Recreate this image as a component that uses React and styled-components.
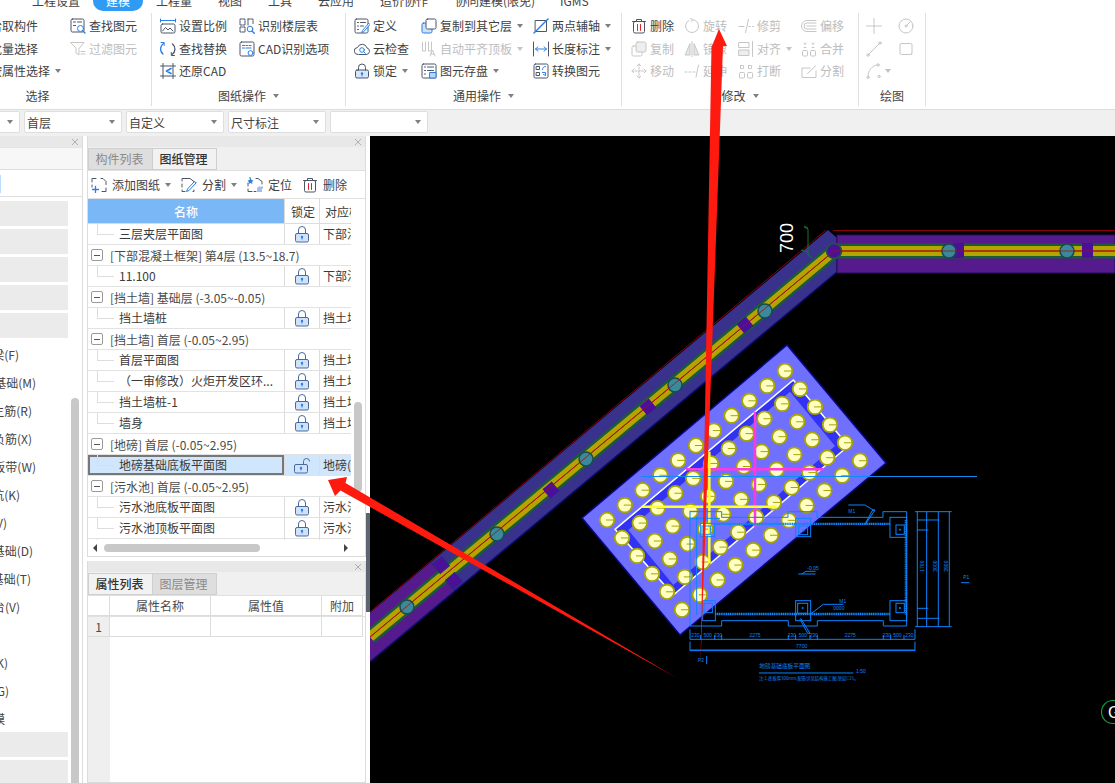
import React from 'react';
import styled, { createGlobalStyle } from 'styled-components';

const Global = createGlobalStyle`
  html, body { margin: 0; padding: 0; background: #fff; }
  * { box-sizing: border-box; }
`;

const FONT = '"Noto Sans CJK SC", "Liberation Sans", sans-serif';

const Page = styled.div`
  position: relative;
  width: 1115px;
  height: 783px;
  overflow: hidden;
  display: flex;
  flex-direction: column;
  font-family: ${FONT};
  font-size: 12px;
  color: #3a3a3a;
  background: #fff;
`;

/* ---------- top tabs ---------- */
const TabBar = styled.div`
  height: 11px;
  flex: none;
  display: flex;
  align-items: flex-end;
  overflow: hidden;
  padding-left: 32px;
`;
const TopTab = styled.div`
  flex: none;
  width: ${p => p.$w}px;
  height: 20px;
  line-height: 20px;
  white-space: nowrap;
  color: #444;
`;
const ActiveTop = styled.div`
  flex: none;
  width: 50px;
  height: 20px;
  margin: 0 13px 0 13px;
  line-height: 20px;
  text-align: center;
  color: #fff;
  background: #2f9bf5;
  border-radius: 0 0 10px 10px;
`;

/* ---------- ribbon ---------- */
const Ribbon = styled.div`
  height: 99px;
  flex: none;
  display: flex;
  border-bottom: 1px solid #dcdcdc;
`;
const Group = styled.div`
  flex: none;
  width: ${p => p.$w}px;
  margin: 2px 0 3px;
  padding-top: 2px;
  display: flex;
  flex-direction: column;
  justify-content: space-between;
  border-right: 1px solid #e0e0e0;
  overflow: hidden;
`;
const GroupBody = styled.div`
  display: grid;
  grid-template-columns: ${p => p.$cols};
  grid-auto-rows: 22.5px;
  margin-left: ${p => p.$left}px;
`;
const GroupLabel = styled.div`
  height: 20px;
  display: flex;
  justify-content: center;
  align-items: center;
  gap: 5px;
  padding-right: ${p => p.$shift || 0}px;
  color: #444;
  line-height: 20px;
`;
const ToolItem = styled.div`
  display: flex;
  align-items: center;
  gap: ${p => p.$gap ?? 3}px;
  white-space: nowrap;
  color: ${p => (p.$off ? '#bdbdbd' : '#3f3f3f')};
  line-height: 16px;
`;
const Caret = styled.span`
  flex: none;
  width: 0;
  height: 0;
  margin-left: ${p => p.$ml ?? 2}px;
  border-left: 3.5px solid transparent;
  border-right: 3.5px solid transparent;
  border-top: 4px solid ${p => (p.$off ? '#c4c4c4' : '#808080')};
`;
const IconSvg = styled.svg`
  flex: none;
  width: 16px;
  height: 16px;
  fill: none;
  stroke-width: 1;
  stroke-linecap: round;
  stroke-linejoin: round;
`;

const D = '#4a5568';
const B = '#2a7fe6';
const R = '#e02424';
const icons = {
  blank: () => null,
  find: (c, a) => <><rect x="1" y="1" width="13" height="13" rx="1.5" stroke={c}/><path d="M3.5 4h2M7.5 4h4M3.5 7.5h2" stroke={c}/><circle cx="10.5" cy="10.5" r="3" stroke={a} fill="#fff"/><path d="M12.7 12.7l2.3 2.3" stroke={a} strokeWidth="1.4"/></>,
  filter: (c) => <><path d="M1 1.5h13l-5 6V14l-3-2V7.5z" stroke={c}/><path d="M11 10.5h4M11 13h4" stroke={c}/></>,
  scale: (c, a) => <><path d="M.5 2.5h15M.5 1v3M15.5 1v3" stroke={a}/><rect x="1" y="6" width="14" height="9" rx="1.5" stroke={c}/><path d="M2.5 13l3-3.5 2.5 2.5 2-2 3 3" stroke={c}/></>,
  floors: (c, a) => <><path d="M1 1h5v6H1zM9 1h5v5M1 9h5v5H1zM9 1v6" stroke={c} strokeDasharray="2.5 1"/><circle cx="11" cy="11" r="2.8" stroke={a}/><path d="M13 13l2.3 2.3" stroke={a} strokeWidth="1.4"/></>,
  replace: (c, a) => <><path d="M3.5 2.5A6.5 6.5 0 0 0 3 13" stroke={a} strokeWidth="1.3"/><path d="M1 1.5h3.2v3" stroke={a}/><path d="M12 13.5A6.5 6.5 0 0 0 12.5 3" stroke={c} strokeWidth="1.3"/><path d="M14.5 14.5h-3.2v-3" stroke={c}/></>,
  cad: (c, a) => <><rect x="1" y="1" width="14" height="14" rx="1.5" stroke={c}/><path d="M3.5 4.5h2M3.5 7h2M7 4.5h1.5M10 4.5h2M7 7h5" stroke={a} strokeWidth="1.2"/><circle cx="11.5" cy="12" r="2.4" stroke={a} fill="#fff"/></>,
  restore: (c, a) => <><path d="M3 .5v15M13 .5v15M.5 3h15M.5 13h15" stroke={c}/><path d="M11 5.5L6.5 8l4.500 2.500" stroke={a} strokeWidth="1.6"/></>,
  define: (c, a) => <><rect x="1" y="1" width="13" height="14" rx="1.5" stroke={c}/><path d="M3.500 4.500h1M6.500 4.500h5M3.500 8h1M6.500 8h3M3.500 11.500h1" stroke={c}/><path d="M14.500 5.500l-6 7-.8 2 2-.7 6-7z" stroke={a} fill="#fff"/></>,
  cloud: (c, a) => <><path d="M4 13.500a3.500 3.500 0 0 1-.5-7A5 5 0 0 1 13 7a3.300 3.300 0 0 1-.5 6.500z" stroke={c}/><circle cx="8" cy="9" r="2.300" stroke={a}/><path d="M9.700 10.700l1.600 1.600" stroke={a}/></>,
  lock: (c, a) => <><rect x="1.500" y="7" width="13" height="8" rx="1.500" stroke={c} fill="#d6e6fa"/><path d="M4.500 7V4.500a3.500 3.500 0 0 1 7 0V7" stroke={c}/><circle cx="8" cy="10.500" r="1.200" fill={a}/><path d="M8 11v2" stroke={a}/></>,
  copyLayer: (c, a) => <><rect x="1" y="5" width="10" height="10" rx="1.500" stroke={a} fill="#cfe2fb"/><rect x="5" y="1" width="10" height="10" rx="1.500" stroke={c} fill="#fff"/></>,
  autoAlign: (c) => <><path d="M1.500 1v9h3V1M7.500 1v9h3V1" stroke={c}/><path d="M9 15l2.500-6 2.500 6M10 13h3" stroke={c}/></>,
  save: (c, a) => <><rect x="1" y="1" width="14" height="14" rx="1.500" stroke={c}/><path d="M3.500 4h1M6.500 4h6M3.500 7.500h1M6.500 7.500h6M3.500 11h1" stroke={c}/><rect x="9" y="9.500" width="6" height="5.500" fill="#bcd6f7" stroke={a}/></>,
  twoPoint: (c, a) => <><rect x="2.500" y="2.500" width="11" height="11" stroke={c}/><path d="M1 15L15 1" stroke={a} strokeWidth="1.500"/></>,
  dim: (c, a) => <><path d="M.5 1v14M15.500 1v14" stroke={c}/><path d="M2.500 8h11M5 5.800L2.500 8 5 10.200M11 5.800L13.500 8 11 10.200" stroke={a}/></>,
  convert: (c, a) => <><rect x="1" y="1" width="14" height="14" rx="1.500" stroke={c}/><rect x="3.500" y="3.500" width="3" height="3" stroke={c}/><rect x="3.500" y="9.500" width="3" height="3" stroke={c}/><path d="M9.500 6.500c0-2 1.500-3 3-3M9.500 9.500h3v3l-2-1" stroke={a}/></>,
  del: (c, a, off) => <><path d="M1.500 3.500h13M5.500 3.500V1.500h5v2" stroke={c}/><rect x="2.500" y="3.500" width="11" height="11.500" rx="1.500" stroke={c}/><path d="M6.500 6.500v6M9.500 6.500v6" stroke={off ? c : R}/></>,
  copy: (c) => <><rect x="1" y="5" width="10" height="10" rx="1.500" stroke={c}/><rect x="5" y="1" width="10" height="10" rx="1.500" stroke={c} fill="#eee"/></>,
  move: (c) => <path d="M8 1v14M1 8h14M6 3l2-2 2 2M6 13l2 2 2-2M3 6L1 8l2 2M13 6l2 2-2 2" stroke={c} strokeDasharray="2 1.200"/>,
  rotate: (c) => <><path d="M5 2.300A6.500 6.500 0 1 0 9 1.600" stroke={c}/><path d="M6.500 .5L9 1.600 7 3.500" stroke={c}/></>,
  mirror: (c) => <><path d="M8 .5v15" stroke={c}/><path d="M6 3v11H1.500zM10 3v11h4.500z" stroke={c} fill="#e6e6e6"/></>,
  trim: (c) => <><path d="M1 8.500h5M11 8.500h1.500M14.500 8.500h1" stroke={c}/><path d="M10.500 1.500l-3 13" stroke={c}/></>,
  extend: (c) => <><path d="M1 9h2M5 9h2M9 9h2" stroke={c}/><path d="M14.500 2l-2.500 12" stroke={c}/></>,
  align: (c) => <><rect x="1" y="1.500" width="10" height="5" stroke={c}/><rect x="1" y="9" width="10" height="5.500" stroke={c} fill="#eee"/><path d="M14.500 .5v15" stroke={c}/></>,
  merge: (c) => <><rect x="1.500" y="9.500" width="5" height="5.500" rx="1" stroke={c}/><rect x="9.500" y="9.500" width="5" height="5.500" rx="1" stroke={c}/><path d="M3 2l1 1.500L5 2M3 6.500h2M11 2l1 1.500L13 2M11 6.500h2" stroke={c}/></>,
  brk: (c) => <><rect x="1.500" y="9.500" width="5" height="5.500" rx="1" stroke={c}/><rect x="9.500" y="9.500" width="5" height="5.500" rx="1" stroke={c}/><path d="M2.500 2.500h3v3h-3zM10.500 2.500h3v3h-3z" stroke={c} strokeDasharray="1.500 1"/></>,
  offset: (c) => <><path d="M15 2.500H6a5.500 5.500 0 0 0 0 11h9" stroke={c}/><path d="M15 5H6a3 3 0 0 0 0 6h9M15 8H6" stroke={c}/></>,
  split: (c) => <><path d="M15 8v6.500H1V5h8" stroke={c}/><path d="M6.500 10.500L14.500 3" stroke={c}/></>,
  point: (c) => <><path d="M8 .5v5M8 10.500v5M.5 8h5M10.500 8h5" stroke={c}/><circle cx="8" cy="8" r="1.500" fill={c}/></>,
  dial: (c) => <><circle cx="8" cy="8" r="7" stroke={c}/><circle cx="8" cy="8" r="1" stroke={c}/><path d="M9 7l3-3" stroke={c}/></>,
  line: (c) => <><path d="M2 14L14 2" stroke={c}/><circle cx="2" cy="14" r="1.200" stroke={c}/><circle cx="14" cy="2" r="1.200" stroke={c}/></>,
  rect: (c) => <><rect x="2" y="2.500" width="12" height="11" rx="1.500" stroke={c}/><circle cx="13.500" cy="13" r=".8" fill={c}/></>,
  arc: (c) => <><path d="M2 14C2 7 6 3 11 2" stroke={c}/><circle cx="2" cy="14.300" r="1.200" stroke={c}/><circle cx="12" cy="2" r="1.200" stroke={c}/><circle cx="13" cy="13.500" r="1.200" stroke={c}/></>,
  add: (c, a) => <><path d="M1 5V1.500h4M10 1.500h2l3 3v3M15 11v3.500h-4M1 8v2" stroke={c}/><path d="M1.500 12.500h6M4.500 9.500v6" stroke={a} strokeWidth="1.300"/></>,
  splitDoc: (c, a) => <><path d="M1 4V1.500h8l4 3V6M1 7v3M1 13v1.500h3M12 14.500h1V13" stroke={c}/><path d="M15 6l-7 7.500-2.500 1 1-2.500L13 5z" stroke={a} fill="#fff"/></>,
  locate: (c, a) => <><path d="M3 1.500v-1M1 6v3M1 12v2.500h4M7 14.500h2M9 1.500h2l4 3V7M15 10v1" stroke={c}/><path d="M3.500 1l1 2 2 .5-1.500 1.500.5 2-2-1-2 1 .5-2L.5 3.500l2-.5z" fill={a}/><path d="M10 15V11l2.500-2 2.500 2v4z" fill="#9cc4f2"/></>,
};

const Icon = ({ name, off }) => {
  const c = off ? '#c6c6c6' : D;
  const a = off ? '#c6c6c6' : B;
  return <IconSvg viewBox="0 0 16 16">{icons[name](c, a, off)}</IconSvg>;
};

const Tool = ({ icon, label, off, caret, ml, gap }) => (
  <ToolItem $off={off} $gap={gap}>
    <Icon name={icon} off={off} />
    {label && <span>{label}</span>}
    {caret && <Caret $off={off} $ml={ml} />}
  </ToolItem>
);

const ribbonGroups = [
  { w: 152, left: -29, cols: '99px auto', label: '选择', shift: 76, items: [
    ['blank', '拾取构件'], ['find', '查找图元'],
    ['blank', '批量选择'], ['filter', '过滤图元', 1],
    ['blank', '按属性选择', 0, 1] ] },
  { w: 194, left: 8, cols: '79px auto', label: '图纸操作', caret: 1, items: [
    ['scale', '设置比例'], ['floors', '识别楼层表'],
    ['replace', '查找替换'], ['cad', 'CAD识别选项'],
    ['restore', '还原CAD'] ] },
  { w: 276, left: 8, cols: '67px 112px auto', label: '通用操作', caret: 1, items: [
    ['define', '定义'], ['copyLayer', '复制到其它层', 0, 1], ['twoPoint', '两点辅轴', 0, 1],
    ['cloud', '云检查'], ['autoAlign', '自动平齐顶板', 1, 1], ['dim', '长度标注', 0, 1],
    ['lock', '锁定', 0, 1], ['save', '图元存盘', 0, 1], ['convert', '转换图元'] ] },
  { w: 237, left: 9, cols: '53px 54px 63px auto', label: '修改', caret: 1, items: [
    ['del', '删除'], ['rotate', '旋转', 1], ['trim', '修剪', 1], ['offset', '偏移', 1],
    ['copy', '复制', 1], ['mirror', '镜像', 1], ['align', '对齐', 1, 1], ['merge', '合并', 1],
    ['move', '移动', 1], ['extend', '延伸', 1], ['brk', '打断', 1], ['split', '分割', 1] ] },
  { w: 67, left: 7, cols: '32px auto', label: '绘图', items: [
    ['point', '', 1], ['dial', '', 1],
    ['line', '', 1], ['rect', '', 1],
    ['arc', '', 1, 1] ] },
];

/* ---------- select bar ---------- */
const SelectBar = styled.div`
  height: 26px;
  flex: none;
  display: flex;
  gap: 4px;
  padding-top: 1px;
  margin-left: -78px;
  background: #f0f0f0;
  width: 1193px;
`;
const SelectBox = styled.div`
  flex: none;
  width: 98px;
  height: 22px;
  padding: 0 6px 0 2px;
  display: flex;
  align-items: center;
  justify-content: space-between;
  background: #fff;
  border: 1px solid #dedede;
  border-radius: 2px;
  color: #444;
`;

/* ---------- main ---------- */
const Main = styled.div`
  flex: 1;
  min-height: 0;
  display: flex;
`;
const LeftPanel = styled.div`
  flex: none;
  width: 83px;
  margin-right: 4px;
  display: flex;
  flex-direction: column;
  border-right: 1px solid #dcdcdc;
  overflow: hidden;
`;
const PanelHead = styled.div`
  flex: none;
  height: 11px;
  display: flex;
  justify-content: flex-end;
  align-items: center;
  padding-right: 3px;
  background: #e8e8e8;
  color: #aaa;
`;
const CloseX = () => (
  <svg width="8" height="8" viewBox="0 0 8 8"><path d="M1 1l6 6M7 1L1 7" stroke="#b0b0b0" strokeWidth="1" /></svg>
);
const LeftBlank = styled.div`
  flex: none;
  height: 23px;
  background: #f7f7f7;
  border-top: 1px solid #e4e4e4;
  border-bottom: 1px solid #dedede;
`;
const LeftSearch = styled.div`
  flex: none;
  height: 27px;
  padding-top: 5px;
  border-bottom: 1px solid #dedede;
`;
const SearchMark = styled.div`
  width: 1px;
  height: 18px;
  background: #bcdcfa;
`;
const LeftBody = styled.div`
  flex: 1;
  min-height: 0;
  display: flex;
  gap: 3px;
`;
const LeftList = styled.div`
  flex: none;
  width: 68px;
  padding-top: 4px;
`;
const GrayRow = styled.div`
  height: 25px;
  margin-bottom: 3px;
  background: #ebebeb;
`;
const LeftText = styled.div`
  height: 28px;
  width: ${p => p.$end}px;
  display: flex;
  align-items: center;
  justify-content: flex-end;
  overflow: hidden;
  white-space: nowrap;
  color: #444;
  margin-top: ${p => p.$mt || 0}px;
`;
const LeftTrack = styled.div`
  flex: none;
  width: 8px;
  margin-top: 201px;
  background: #c8c8c8;
  border-radius: 4px 4px 0 0;
`;

const MiddleColumn = styled.div`
  flex: none;
  width: 279px;
  display: flex;
  flex-direction: column;
  gap: 4px;
`;
const Panel = styled.div`
  flex: ${p => (p.$h ? 'none' : '1')};
  height: ${p => (p.$h ? `${p.$h}px` : 'auto')};
  min-height: 0;
  display: flex;
  flex-direction: column;
  border: 1px solid #dcdcdc;
  border-top: 0;
  overflow: hidden;
`;
const TabRow = styled.div`
  flex: none;
  height: 23px;
  padding-top: 1px;
  display: flex;
  background: #f0f0f0;
`;
const PanelTab = styled.div`
  flex: none;
  width: 65px;
  padding: 0 2px 2px 0;
  display: flex;
  align-items: center;
  justify-content: center;
  border: 1px solid #cfcfcf;
  margin-left: -1px;
  background: ${p => (p.$on ? '#f2f2f2' : '#dedede')};
  color: ${p => (p.$on ? '#333' : '#8a8a8a')};
  font-weight: ${p => (p.$on ? 500 : 400)};
  &:first-child { margin-left: 0; }
`;
const Toolbar = styled.div`
  flex: none;
  height: 29px;
  display: flex;
  align-items: center;
  gap: 10px;
  padding-left: 3px;
  border-top: 1px solid #e0e0e0;
  border-bottom: 1px solid #e0e0e0;
`;
const TableWrap = styled.div`
  flex: 1;
  min-height: 0;
  display: flex;
`;
const TableCol = styled.div`
  flex: none;
  width: 263px;
  overflow: hidden;
`;
const HeadRow = styled.div`
  height: 25px;
  display: grid;
  grid-template-columns: 196px 35px 1fr;
  border-bottom: 1px solid #dcdcdc;
`;
const NameHead = styled.div`
  display: flex;
  align-items: center;
  justify-content: center;
  background: #79b7f7;
  color: #fff;
  font-weight: 500;
`;
const HeadCell = styled.div`
  display: flex;
  align-items: center;
  padding-left: ${p => p.$pad ?? 5}px;
  border-left: 1px solid #dcdcdc;
  white-space: nowrap;
  overflow: hidden;
`;
const RowsClip = styled.div`
  height: 316px;
  overflow: hidden;
`;
const DataRow = styled.div`
  height: 21px;
  display: grid;
  grid-template-columns: 196px 35px 1fr;
  border-bottom: 1px solid #e2e2e2;
  background: ${p => (p.$sel ? '#d0e6fc' : '#fff')};
`;
const NameCell = styled.div`
  position: relative;
  padding-left: 31px;
  line-height: 20px;
  white-space: nowrap;
  overflow: hidden;
  box-shadow: ${p => (p.$sel ? 'inset 0 0 0 2px #777' : 'none')};
  &::before {
    content: '';
    position: absolute;
    left: 9px;
    top: -1px;
    width: 16px;
    height: 11px;
    border-left: 1px solid #ddd;
    border-bottom: 1px solid #ddd;
  }
`;
const LockCell = styled.div`
  display: flex;
  align-items: center;
  justify-content: center;
  padding-right: 1px;
  border-left: 1px solid #dcdcdc;
`;
const BindCell = styled.div`
  padding-left: 3px;
  line-height: 20px;
  white-space: nowrap;
  overflow: hidden;
  border-left: 1px solid #dcdcdc;
`;
const GroupRow = styled.div`
  height: 21px;
  display: flex;
  align-items: center;
  gap: 7px;
  padding-left: 3px;
  border-bottom: 1px solid #e2e2e2;
  white-space: nowrap;
  color: #4a4a4a;
`;
const MinusBox = styled.span`
  flex: none;
  width: 12px;
  height: 12px;
  display: flex;
  align-items: center;
  justify-content: center;
  border: 1px solid #9a9a9a;
  border-radius: 2px;
  &::after {
    content: '';
    width: 6px;
    height: 1px;
    background: #555;
  }
`;
const VTrack = styled.div`
  flex: 1;
  padding: 203px 0 0 3px;
`;
const VThumb = styled.div`
  width: 8px;
  height: 90px;
  border-radius: 4px;
  background: #c8c8c8;
`;
const HBar = styled.div`
  flex: none;
  height: 16px;
  display: flex;
  align-items: center;
  padding: 0 0 1px 5px;
`;
const HThumb = styled.div`
  flex: none;
  width: 156px;
  height: 8px;
  margin: 0 84px 0 7px;
  border-radius: 4px;
  background: #c8c8c8;
`;
const ArrowGlyph = styled.span`
  flex: none;
  width: 0;
  height: 0;
  border-top: 4px solid transparent;
  border-bottom: 4px solid transparent;
  ${p => (p.$dir === 'l' ? 'border-right: 4px solid #444;' : 'border-left: 4px solid #444;')}
`;

const PropHead = styled.div`
  flex: none;
  display: grid;
  grid-template-columns: 22px 101px 111px 41px;
  height: 21px;
  border-top: 1px solid #e0e0e0;
`;
const PropCell = styled.div`
  display: flex;
  align-items: center;
  justify-content: center;
  border-right: 1px solid #dcdcdc;
  border-bottom: 1px solid #dcdcdc;
  background: ${p => (p.$num ? '#efefef' : '#fff')};
  color: #4a4a4a;
`;
const PropFill = styled.div`
  flex: 1;
  width: 22px;
  background: #efefef;
`;
const Splitter = styled.div`
  flex: none;
  width: 4px;
  padding-top: 377px;
`;
const SplitHandle = styled.div`
  height: 99px;
  background: #5c6672;
`;
const Canvas = styled.div`
  flex: 1;
  min-width: 0;
  background: #000;
  overflow: hidden;
`;
const CadSvg = styled.svg`
  display: block;
  width: 745px;
  height: 647px;
`;
const OverlayArrows = styled.svg`
  position: absolute;
  left: 0;
  top: 0;
  width: 1115px;
  height: 783px;
  pointer-events: none;
`;

/* ---------- CAD drawing ---------- */
const piles = [];
for (let r = 0; r < 6; r++) {
  for (let c = 0; c < 11; c++) {
    piles.push([785 + r * 15 - c * 17.8, 371 + r * 17.95 + c * 14.9]);
  }
}
const zx = v => 570 + v / 3;
const zy = v => 340 + v / 3;
const pts = arr => arr.map(([x, y]) => `${zx(x)},${zy(y)}`).join(' ');
const diagBalls = [[407, 607], [497, 534], [586, 459], [675, 385], [765, 311]];
const diagSquares = [[441, 565], [454, 581], [551, 490], [648, 407], [745, 325]];
const horizBalls = [949, 1067];
const horizSquares = [958, 1087];
const BLUE = '#0a84ff';

const dimBottom = [[30, 62, '230'], [62, 104, '500'], [104, 125, '230'], [125, 325, '2275'], [325, 347, '230'], [347, 390, '500'], [390, 412, '230'], [412, 610, '2275'], [610, 632, '230'], [632, 672, '500'], [672, 705, '230']];

const CadPlan = () => (
  <g transform="translate(680 500) scale(.3333)" stroke={BLUE} fill="none" strokeWidth="3">
    <path d="M30 35H125V52H324V35H411V52H609V35H680V378H610V362H412V378H325V362H125V378H30Z" />
    <path d="M105 70H630M105 73H630M105 340H630M105 344H630M676 60V345M680 60V345" strokeWidth="3.500" strokeDasharray="4 1.500" />
    <path d="M50 50V345M50 55H120M30 56H55" />
    <g>
      <rect x="630" y="52" width="50" height="60" /><rect x="648" y="75" width="25" height="28" /><circle cx="660" cy="89" r="2" />
      <rect x="630" y="302" width="50" height="60" /><rect x="648" y="310" width="25" height="28" /><circle cx="660" cy="324" r="2" />
      <rect x="347" y="302" width="45" height="60" /><rect x="353" y="310" width="30" height="30" /><circle cx="368" cy="324" r="2" />
      <rect x="347" y="55" width="45" height="55" /><rect x="356" y="78" width="27" height="26" /><circle cx="370" cy="91" r="2" />
      <rect x="62" y="70" width="42" height="40" /><rect x="66" y="78" width="25" height="25" />
      <rect x="68" y="302" width="38" height="60" /><rect x="72" y="310" width="25" height="28" />
    </g>
    <path d="M505 15H555L585 33M555 75L585 30L578 30L555 72M392 342L430 313H490M362 355L390 400L383 400L360 358" />
    <path d="M355 222H407M365 222L378 214H407" />
    <path d="M712 35V380M740 35V380M775 35V380M808 35V380M705 35H815M705 380H815M712 60H745M712 90H745M712 325H745M712 355H745M745 60H778M745 355H778" />
    <path d="M30 388V418H705V388M62 405V420M104 405V420M125 405V420M325 405V420M347 405V420M390 405V420M412 405V420M610 405V420M632 405V420M672 405V420" />
    <path d="M30 425V452H705V425M30 450H705" />
    <path d="M80 468V492M237 519H520M843 248H868" />
    <g stroke="none" fill={BLUE} fontFamily="Liberation Sans, sans-serif" fontSize="15">
      {dimBottom.map(([a, b, t], i) => (
        <text key={i} x={(a + b) / 2} y="410" textAnchor="middle">{t}</text>
      ))}
      <text x="365" y="444" textAnchor="middle">7700</text>
      <text x="54" y="486">P2</text>
      <text x="238" y="503" fontSize="17" fontFamily="Noto Sans CJK SC, sans-serif">地磅基础底板平面图</text>
      <text x="528" y="520">1:50</text>
      <text x="237" y="539" fontSize="13" fontFamily="Noto Sans CJK SC, sans-serif">注:1.底板厚300mm,配筋详见结构施工图,垫层C15。</text>
      <text x="850" y="238">P1</text>
      <text x="505" y="40">M1</text>
      <text x="478" y="308">M1</text>
      <text x="460" y="330">0000</text>
      <text x="382" y="210">-0.05</text>
      <text x="733" y="215" transform="rotate(-90 733 215)">1700</text>
      <text x="770" y="215" transform="rotate(-90 770 215)">3000</text>
      <text x="803" y="215" transform="rotate(-90 803 215)">3900</text>
    </g>
  </g>
);

const CadDrawing = () => (
  <CadSvg viewBox="370 136 745 647">
    {/* diagonal strip */}
    <polygon points="370,613 828,230 837,238 837,272 370,662" fill="#39328c" />
    <polygon points="370,613 435,559 459,588 370,662" fill="#551a8b" />
    <path d="M370 662L837 272" stroke="#0a0a70" strokeWidth="1.500" />
    <path d="M370 612L826 230" stroke="#8a0010" strokeWidth="1" />
    <path d="M837 235V272L856 258" stroke="#16106a" fill="none" />
    {/* horizontal strip */}
    <rect x="837" y="235" width="278" height="38" fill="#551a8b" stroke="#24105a" />
    <path d="M833 230.500H1115" stroke="#8a0010" strokeWidth="1" />
    <path d="M370 637L834 251H1115" stroke="#1c5a3c" strokeWidth="15" fill="none" />
    <path d="M370 637L834 251H1115" stroke="#b5a400" strokeWidth="10" fill="none" />
    <path d="M370 637L834 251H1115" stroke="#a01010" strokeWidth="1" fill="none" />
    <path d="M804 227l4 2v26l4 3M808 228l-4-2M801 250l7 2" stroke="#0e7a2c" fill="none" />
    {diagSquares.map(([x, y], i) => (
      <rect key={i} x={x - 6} y={y - 6} width="12" height="12" fill="#4c0f9a" transform={`rotate(-40 ${x} ${y})`} stroke={i < 2 ? '#2a2a80' : 'none'} />
    ))}
    {horizSquares.map(x => <rect key={x} x={x - 5} y="243" width="11" height="15" fill="#4c0f9a" />)}
    {diagBalls.map(([x, y], i) => (
      <circle key={i} cx={x} cy={y} r="7" fill="#3a8a9c" stroke="#1a4a50" strokeWidth="1.500" />
    ))}
    {horizBalls.map(x => <circle key={x} cx={x} cy="251" r="7" fill="#3a8a9c" stroke="#1a4a50" strokeWidth="1.500" />)}
    <circle cx="834" cy="251" r="7.500" fill="#4c0f9a" stroke="#1c5a3c" strokeWidth="1.500" />
    <path d="M370 637L834 251H1115" stroke="#a01010" strokeWidth=".8" fill="none" />
    <text x="0" y="0" fill="#fff" fontFamily="Liberation Sans, sans-serif" fontSize="18" transform="translate(793 253) rotate(-90)">700</text>

    {/* foundation plate */}
    <polygon points="787,345 886,463 680,635 582,518" fill="#7070ff" stroke="#0a0a90" strokeWidth="1.500" />
    <polygon points={pts([[670, 120], [835, 318], [310, 765], [135, 568]])} fill="#3232f5" />
    <polygon points={pts([[660, 155], [795, 318], [310, 735], [175, 570]])} fill="#7070ff" />
    <path d={`M${zx(135)} ${zy(568)}L${zx(670)} ${zy(120)}L${zx(835)} ${zy(318)}L${zx(310)} ${zy(765)}Z`} fill="none" stroke="#fff" strokeWidth="1.500" />
    {piles.map(([x, y], i) => (
      <g key={i}>
        <circle cx={x} cy={y} r="7.300" fill="#ffffc4" stroke="#a8a400" strokeWidth="1.800" />
        <path d={`M${x - 1} ${y}H${x + 7}`} stroke="#a8a400" />
      </g>
    ))}
    <path d={`M${zx(348)} ${zy(388)}H${zx(760)}M${zx(555)} ${zy(215)}V${zy(560)}`} stroke="#ff38e0" strokeWidth="2.500" />
    <path d={`M${zx(215)} ${zy(500)}H${zx(620)}M${zx(418)} ${zy(335)}V${zy(670)}`} stroke="#ffff30" strokeWidth="2.500" />
    <path d="M641 476.500H977" stroke="#0f8cf0" strokeWidth="1.200" />
    <CadPlan />

    {/* G marker */}
    <circle cx="1113" cy="712" r="11.500" stroke="#12a03c" fill="none" strokeWidth="1.200" />
    <text x="1108" y="718" fill="#fff" fontFamily="Liberation Sans, sans-serif" fontSize="16">G</text>
  </CadSvg>
);

/* ---------- table data ---------- */
const rows = [
  ['r', '三层夹层平面图', '下部混凝土框架'],
  ['g', '[下部混凝土框架] 第4层 (13.5~18.7)'],
  ['r', '11.100', '下部混凝土框架'],
  ['g', '[挡土墙] 基础层 (-3.05~-0.05)'],
  ['r', '挡土墙桩', '挡土墙'],
  ['g', '[挡土墙] 首层 (-0.05~2.95)'],
  ['r', '首层平面图', '挡土墙'],
  ['r', '（一审修改）火炬开发区环...', '挡土墙'],
  ['r', '挡土墙桩-1', '挡土墙'],
  ['r', '墙身', '挡土墙'],
  ['g', '[地磅] 首层 (-0.05~2.95)'],
  ['s', '地磅基础底板平面图', '地磅(地磅)'],
  ['g', '[污水池] 首层 (-0.05~2.95)'],
  ['r', '污水池底板平面图', '污水池'],
  ['r', '污水池顶板平面图', '污水池'],
  ['r', '', '污水池'],
];

const LockIcon = ({ open }) => (
  <svg width="16" height="17" viewBox="0 0 16 17" fill="none">
    <rect x={open ? 0.5 : 1.5} y="7.500" width="13" height="8.500" rx="1.500" fill="#cfe2fa" stroke="#4a6a9c" />
    {open
      ? <path d="M9.500 7.500V4.500a3 3 0 0 1 6 0" stroke="#4a6a9c" />
      : <path d="M4.500 7.500V4a3.500 3.500 0 0 1 7 0v3.500" stroke="#4a6a9c" />}
    <circle cx={open ? 7 : 8} cy="11" r="1.200" fill="#2a7fe6" />
    <path d={open ? 'M7 11v2.500' : 'M8 11v2.500'} stroke="#2a7fe6" />
  </svg>
);

const leftLabels = [
  ['框架梁(F)', 19], ['独立基础(M)', 36], ['柱主筋(R)', 32], ['板负筋(X)', 32], ['板带(W)', 36],
  ['集水坑(K)', 20], ['墙(V)', 7], ['桩基础(D)', 33], ['条基础(T)', 31], ['承台(V)', 20],
  ['', 10], ['柱(K)', 8], ['钢筋(G)', 9], ['建模', 5],
];

const topTabs = [['工程量', 62], ['视图', 50], ['工具', 50], ['云应用', 62], ['造价协作', 75], ['协同建模(限免)', 105], ['IGMS', 40]];

export default function App() {
  return (
    <Page>
      <Global />
      <TabBar>
        <TopTab $w={48}>工程设置</TopTab>
        <ActiveTop>建模</ActiveTop>
        {topTabs.map(([t, w]) => <TopTab key={t} $w={w}>{t}</TopTab>)}
      </TabBar>
      <Ribbon>
        {ribbonGroups.map(g => (
          <Group key={g.label} $w={g.w}>
            <GroupBody $cols={g.cols} $left={g.left}>
              {g.items.map(([icon, label, off, caret], i) => (
                <Tool key={i} icon={icon} label={label} off={!!off} caret={!!caret} ml={label ? 2 : 0} />
              ))}
            </GroupBody>
            <GroupLabel $shift={g.shift}>{g.label}{g.caret && <Caret />}</GroupLabel>
          </Group>
        ))}
      </Ribbon>
      <SelectBar>
        {['', '首层', '自定义', '尺寸标注', ''].map((t, i) => (
          <SelectBox key={i}><span>{t}</span><Caret $ml={0} /></SelectBox>
        ))}
      </SelectBar>
      <Main>
        <LeftPanel>
          <PanelHead><CloseX /></PanelHead>
          <LeftBlank />
          <LeftSearch><SearchMark /></LeftSearch>
          <LeftBody>
            <LeftList>
              {[0, 1, 2, 3, 4].map(i => <GrayRow key={i} />)}
              {leftLabels.map(([t, end], i) => <LeftText key={i} $end={end} $mt={i === 0 ? -1 : 0}>{t}</LeftText>)}
              <GrayRow />
              <GrayRow />
            </LeftList>
            <LeftTrack />
          </LeftBody>
        </LeftPanel>
        <MiddleColumn>
          <Panel $h={421}>
            <PanelHead><CloseX /></PanelHead>
            <TabRow>
              <PanelTab>构件列表</PanelTab>
              <PanelTab $on>图纸管理</PanelTab>
            </TabRow>
            <Toolbar>
              <Tool icon="add" label="添加图纸" caret ml={0} gap={5} />
              <Tool icon="splitDoc" label="分割" caret ml={0} gap={5} />
              <Tool icon="locate" label="定位" gap={5} />
              <Tool icon="del" label="删除" gap={5} />
            </Toolbar>
            <TableWrap>
              <TableCol>
                <HeadRow>
                  <NameHead>名称</NameHead>
                  <HeadCell $pad={6}>锁定</HeadCell>
                  <HeadCell $pad={5}>对应楼层</HeadCell>
                </HeadRow>
                <RowsClip>
                  {rows.map(([k, a, b], i) => (k === 'g'
                    ? <GroupRow key={i}><MinusBox />{a}</GroupRow>
                    : (
                      <DataRow key={i} $sel={k === 's'}>
                        <NameCell $sel={k === 's'}>{a}</NameCell>
                        <LockCell><LockIcon open={k === 's'} /></LockCell>
                        <BindCell>{b}</BindCell>
                      </DataRow>
                    )))}
                </RowsClip>
              </TableCol>
              <VTrack><VThumb /></VTrack>
            </TableWrap>
            <HBar>
              <ArrowGlyph $dir="l" />
              <HThumb />
              <ArrowGlyph $dir="r" />
            </HBar>
          </Panel>
          <Panel>
            <PanelHead><CloseX /></PanelHead>
            <TabRow>
              <PanelTab $on>属性列表</PanelTab>
              <PanelTab>图层管理</PanelTab>
            </TabRow>
            <PropHead>
              <PropCell />
              <PropCell>属性名称</PropCell>
              <PropCell>属性值</PropCell>
              <PropCell>附加</PropCell>
            </PropHead>
            <PropHead>
              <PropCell $num>1</PropCell>
              <PropCell />
              <PropCell />
              <PropCell />
            </PropHead>
            <PropFill />
          </Panel>
        </MiddleColumn>
        <Splitter><SplitHandle /></Splitter>
        <Canvas><CadDrawing /></Canvas>
      </Main>
      <OverlayArrows viewBox="0 0 1115 783">
        <polygon points="700.500,665 711.500,46 712,46 719,29 727,46 723,46" fill="#fe1a0e" />
        <polygon points="328,480 347,477 345.500,483 677,678 340.500,490.500 335,496" fill="#fe1a0e" />
      </OverlayArrows>
    </Page>
  );
}
